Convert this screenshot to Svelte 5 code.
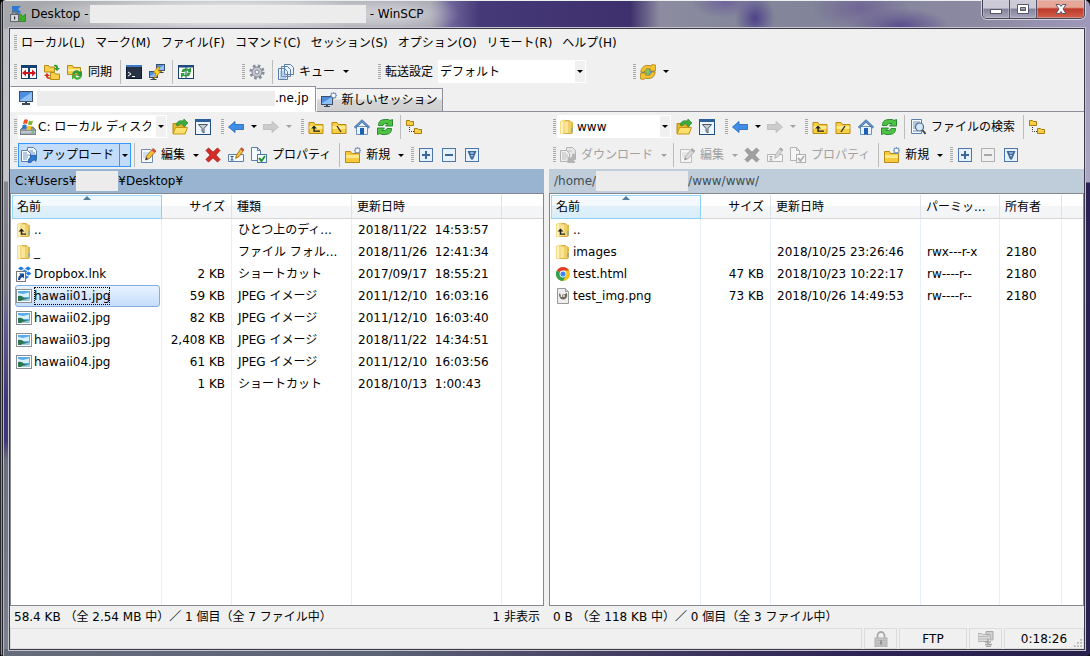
<script>
  const folder = '<path d="M1 3.5h5l1.5 2H15v9H1z" fill="#f6cf45" stroke="#b98a12"/><path d="M1.5 7h13v3h-13z" fill="#fde98c"/>';
  const openFolder = '<path d="M1 4.500h4l1 1.500h7v8.500H1z" fill="#e9b92c" stroke="#b98a12"/><path d="M3.500 8.500h12l-2.500 6.500H1z" fill="#fde06a" stroke="#c39518"/>';
  const monitor = (x, y, w, h) =>
    `<rect x="${x + 0.5}" y="${y + 0.5}" width="${w - 1}" height="${h - 1}" fill="#4b8ee2" stroke="#3d4f68"/><path d="M${x + 1} ${y + h - 2}L${x + w - 1} ${y + 1}V${y + h - 1}H${x + 1}z" fill="#8fc0f7"/><path d="M${x + w / 2 - 1} ${y + h}h2v1h2v1h-6v-1h2z" fill="#33475f"/>`;
  const star = '<g stroke="#6f93bd" stroke-width="1.500"><path d="M12.500 0v7M9 3.500h7M10 1l5 5M15 1l-5 5"/></g><circle cx="12.500" cy="3.500" r="1.800" fill="#fff"/>';
  const box = (inner) => `<rect x="1.500" y="1.500" width="13" height="13" fill="#e6f1ff" stroke="#4d76a8"/>${inner}`;
  const yellowFolder = '<path d="M3 1h7l3 2v12H4z" fill="#dcae43"/><path d="M1 2l5-1.500V14l-4 1.500-1-1z" fill="#f5dc85"/><path d="M2 2.500L4 2v12l-2 .500z" fill="#fdf2c0"/><path d="M6 2.500h6V14H6z" fill="#efd06a"/><path d="M6 2.500h3V14H6z" fill="#f9e694"/><path d="M12 3h2v11l-2 1z" fill="#e2b94e"/><path d="M12.500 9h1v4h-1z" fill="#57a8d8"/>';
  const doc = '<path d="M1.500 2.500h9l2 2v11h-11z" fill="#f5faff" stroke="#6a8db8"/>';

  const icons = {
    app: '<path d="M2 0h9L8 3l3 3-4 3-3-3-2 2z" fill="#2d7ad0"/><path d="M15.500 15.500H8l2-2-3-3 3-3 3 3 2.500-2.500z" fill="#3cae2b" stroke="#1f7d14" stroke-width=".7"/><path d="M2.500 9V7.500a2 2 0 0 1 4 0V9" fill="none" stroke="#6b6f76" stroke-width="1.500"/><rect x=".5" y="8.500" width="8" height="7" fill="#d2d5da" stroke="#61666f"/><path d="M4 10.500h1.200v3H4z" fill="#333"/>',
    compare: '<rect x=".5" y="1.500" width="15" height="13" fill="#fff" stroke="#16406f"/><path d="M0 1h16v3H0zM7 2h2v13H7z" fill="#16406f"/><path d="M1 9l4-3.500V8h6V5.500L15 9l-4 3.500V10H5v2.500z" fill="#d1171b"/>',
    syncBrowse: '<path d="M.5 1.500h4l1 1.500h5v5H.5zM6.500 8.500h4l1 1.500h4v5.500h-9z" fill="#f8cf48" stroke="#b78c18"/><path d="M10 1c3-1 4 0 4 3h2l-3 3-3-3h2c0-1-1-2-2-2z" fill="#2d9e3c"/><path d="M6 15c-3 0-4-1-4-3H0l3-3 3 3H4c0 1 1 1.500 2 1.500z" fill="#d6301f"/>',
    sync: '<path d="M.5 1.500h5l1 2h7v7H.5z" fill="#f8cf48" stroke="#b78c18"/><path d="M1 5h12v2H1z" fill="#fdea94"/><path d="M5 10c1-4 6-5 8-2l2-1v5h-5l1.500-1.500C10 8.500 8 9 7.500 10.500z" fill="#2f9c3a"/><path d="M15 12c-1 4-6 5-8 2l-2 1.500V11h5l-1.500 1.500c1.500 1.500 3.500 1 4-.5z" fill="#48b13f"/>',
    console: '<rect x=".5" y="1.500" width="15" height="13" fill="#273345" stroke="#0e1b30"/><path d="M0 1h16v2H0z" fill="#3a79ce"/><path d="M2 8l3 2-3 2M6 12.500h3" fill="none" stroke="#fff"/>',
    putty: monitor(7, 0, 9, 7) + monitor(0, 7, 9, 7) + '<path d="M9 3L4 9h3l-2 6 7-8H9l2-4z" fill="#ffd92e" stroke="#b47b00" stroke-width=".8"/>',
    refreshPanels: '<rect x=".5" y="1.500" width="15" height="13" fill="#fff" stroke="#16406f"/><path d="M0 1h16v2.500H0zM7.500 2h1v13h-1z" fill="#1d4a80"/><path d="M3.500 8C4 4.500 7 4 11 5l1-1h1v4.500H9L10.500 7C8 6.500 7 6.500 6.500 8zM12.500 9c-.5 3.500-3.500 4-7.500 3l-1 1.500H3V9h4l-1.500 1.500c2.500.5 3.500.5 4-1.500z" fill="#2c9a36"/>',
    gear: '<circle cx="8" cy="8" r="6.300" fill="none" stroke="#858d99" stroke-width="2.600" stroke-dasharray="2.600 2.350"/><circle cx="8" cy="8" r="5" fill="#c4c9d2" stroke="#7f8793"/><circle cx="8" cy="8" r="2" fill="#f3f4f6" stroke="#7f8793"/>',
    queue: '<g fill="#eaf3ff" stroke="#587fae"><path d="M6.500.5h6l3 3v7h-9zM3.500 2.500h6l3 3v7h-9zM.5 4.500h6l3 3v8h-9z"/></g><path d="M2 8h4M2 10h6M2 12h6M2 14h6" stroke="#8cabd0"/>',
    globe: '<circle cx="8" cy="8" r="7" fill="#4a9be0"/><path d="M5 4l4 1 1 4-3 3-2-3z" fill="#80c463"/><path d="M.8 8C1 3 6 0 11 2l1-1.500 3.500.500v6h-6l1.500-1.500C8 3.500 5 5 4.500 8z" fill="#f1c232" stroke="#b27c08" stroke-width=".7"/><path d="M15.200 8c-.2 5-5.200 8-10.200 6l-1 1.500-3.500-.5V9h6L5 10.500c3 2 6 .5 6.500-2.500z" fill="#f1c232" stroke="#b27c08" stroke-width=".7"/>',
    monitor: monitor(1, 1, 14, 11) + '<path d="M4 13h8v2H4z" fill="#3b4756"/>',
    newSession: monitor(0, 4, 12, 9) + '<path d="M3 14h6v1H3z" fill="#3b4756"/>' + star,
    drive: '<path d="M0 11l3-3h10l3 3v4.500H0z" fill="#8d969f" stroke="#56606a" stroke-width=".7"/><path d="M1 12h14v2.500H1z" fill="#bec5cb"/><path d="M11.500 12.500h2.500v1.500h-2.500z" fill="#54c944"/><path d="M4 1q2-1.500 4 0L7 5Q5 4 3 5z" fill="#ef5426"/><path d="M9 1.500q2 1.500 4 0l-1 4q-2 1-4 0z" fill="#77b829"/><path d="M2.700 6q2-1 4 0l-1 4q-2-1-4 0z" fill="#2a77cb"/><path d="M7.700 6.500q2 1 4 0l-1 4q-2 1-4 0z" fill="#f7c31c"/>',
    open: openFolder + '<path d="M4 6C5 2 8 1 11 2l1-2 4 4-4 4-1-2.500C9 4.500 7 5 6 7z" fill="#3dab3b" stroke="#23802a" stroke-width=".6"/>',
    filter: '<rect x=".5" y=".5" width="15" height="15" fill="#eef5ff" stroke="#234e80"/><path d="M0 0h16v3H0z" fill="#2d5f9b"/><path d="M3.500 5.500h9L9 9.500V14l-2-1.500v-3z" fill="#c4ccd5" stroke="#4e5966"/>',
    back: '<path d="M.5 8L7 2.500v3h8.500v5H7v3z" fill="#3f8fe8" stroke="#2361b1" stroke-width=".8"/>',
    forward: '<path d="M15.500 8L9 2.500v3H.5v5H9v3z" fill="#a8a8a8" stroke="#808080" stroke-width=".8"/>',
    up: folder + '<path d="M3 9.500L6 6.500l3 3H6.700v2H12v1.200H5.300V9.500z" fill="#222"/>',
    rootBack: folder + '<path d="M6 7l4 6" stroke="#222" stroke-width="1.300"/>',
    rootSlash: folder + '<path d="M10 7l-4 6" stroke="#222" stroke-width="1.300"/>',
    home: '<path d="M2.500 7.500h11v8h-11z" fill="#e9f3ff" stroke="#6a94c4"/><path d="M.3 8L8 .7 15.700 8l-1.200 1L8 3.300 1.500 9z" fill="#5f96cf" stroke="#2f5d94" stroke-width=".7"/><path d="M6 9h4v6.500H6z" fill="#1d61b5"/>',
    refresh: '<path d="M1.500 6.500C1.500 2 4 .5 9 .5h2.500L13 1.500 15.500.5v6.500H8.500L11 4.500H9Q6 4.500 6 6.500z" fill="#4fc145" stroke="#1e8426" stroke-width=".9"/><path d="M14.500 9.500c0 4.500-2.500 6-7.500 6H4.500L3 14.500.5 15.500V9h7L5 11.500h2q3 0 3-2z" fill="#4fc145" stroke="#1e8426" stroke-width=".9"/>',
    tree: '<path d="M.5 1.500h3l1 1h3v4h-7zM8.500 9.500h3l1 1h3v4h-7z" fill="#f8cf48" stroke="#a97c0c"/><path d="M3.500 8v4.500H8" stroke="#333" fill="none" stroke-dasharray="1 1"/>',
    upload: '<path d="M6.500.5h6l3 3v9h-9z" fill="#f5faff" stroke="#587fae"/><path d="M.5 3.500h6l3 3v8h-9z" fill="#fff" stroke="#587fae"/><path d="M2 6h4M2 8h6M2 10h5M2 12h4M8 4h4M9 6h5" stroke="#6d93c2"/><path d="M7 15.500q0-4 3-6L8.500 8H15v6.500L13.500 13Q11 13 10 15.500z" fill="#2f7ad1" stroke="#174e91" stroke-width=".6"/>',
    download: '<path d="M6.500.5h6l3 3v9h-9z" fill="#ddd" stroke="#777"/><path d="M.5 3.500h6l3 3v8h-9z" fill="#eee" stroke="#777"/><path d="M2 6h4M2 8h6M2 10h5M2 12h4M8 4h4" stroke="#888"/><path d="M14.500 6.500q2 4-1 6.500l1.500 1.500V16H7.500V9l2 2q3 0 2.500-4z" fill="#777"/>',
    edit: doc + '<path d="M3 6h6M3 8h5M3 10h4" stroke="#aac2de"/><path d="M5.500 13l1-4L13 1.500l3 2.500-6.500 7.500z" fill="#f5bf3a" stroke="#94640d" stroke-width=".8"/><path d="M13 1.500l3 2.500-1.500 1.800-3-2.500z" fill="#d8483e"/><path d="M5.500 13l.7-2.500 1.800 1.500z" fill="#222"/>',
    remove: '<path d="M3.500 1L8 5.200 12.500 1 15 3.500 10.800 8 15 12.500 12.500 15 8 10.800 3.500 15 1 12.500 5.200 8 1 3.500z" fill="#d92b25" stroke="#9b100e" stroke-width=".8"/>',
    rename: '<path d="M.5 7.500h15v7H.5z" fill="#f5faff" stroke="#587fae"/><path d="M2.500 9.500h3M2.500 13h3M4 9.500V13" stroke="#2e5487"/><path d="M7.500 11.500l1-3.500L13.500.700l2.500 2-5 7z" fill="#f5bf3a" stroke="#94640d" stroke-width=".8"/><path d="M13.500.7l2.500 2-1.200 1.600-2.500-2z" fill="#d8483e"/>',
    props: '<path d="M.5.5h6l3 3v10h-9z" fill="#f5faff" stroke="#587fae"/><path d="M6.500.5v3h3" fill="none" stroke="#587fae"/><rect x="6.500" y="7.500" width="9" height="8" fill="#fff" stroke="#4a76ab"/><path d="M8 11l2.500 3L14 9" fill="none" stroke="#239a35" stroke-width="2"/>',
    newFolder: '<path d="M.5 4.500h5l1 2h8v9H.5z" fill="#f6c93e" stroke="#b98a12"/><path d="M1 8h13v3H1z" fill="#fde98c"/>' + star,
    plus: box('<path d="M4 8h8M8 4v8" stroke="#3d6699" stroke-width="2"/>'),
    minus: box('<path d="M4 8h8" stroke="#3d6699" stroke-width="2"/>'),
    invert: box('<path d="M3.500 4h9L9 12.500H7zM7 8l1 2 1-2zM6 5.500l.5 1h3l.5-1z" fill="#3d6699" fill-rule="evenodd"/>'),
    find: '<path d="M1.500.5h10v14h-10z" fill="#f5faff" stroke="#587fae"/><path d="M3 3h7M3 5h4M3 7h3M3 9h3M3 12h5" stroke="#6d93c2"/><circle cx="9.500" cy="8" r="4" fill="#d4e8fb" stroke="#516983" stroke-width="1.200"/><path d="M12.500 11l3 4" stroke="#3f4a58" stroke-width="2"/>',
    parent: yellowFolder + '<path d="M2.500 9.500l3-3 3 3H6.200v2H10v1.300H4.800V9.500z" fill="#222"/>',
    folder: yellowFolder,
    dropbox: '<path d="M5 .5L8 2.500 5 4.500 2 2.500zM12 .5l3 2-3 2-3-2zM8.500 3.500l3 2-3 2-3-2zM12.500 5.500l3 2-3 2-3-2zM10 9.500l3 1.500-3 2z" fill="#1f7de2"/><rect x=".5" y="5.500" width="9" height="10" fill="#fff" stroke="#777"/><path d="M2 14q0-4 2.500-5L3 7.500h5v5L6.500 11Q4.500 11.500 4 14z" fill="#12498f"/>',
    image: '<rect x=".5" y="1.500" width="15" height="13" fill="#fff" stroke="#8a8f96"/><path d="M2 3h12v10H2z" fill="#5aade6"/><path d="M2 5l5 1 6-1.500V9H2z" fill="#d8effc"/><path d="M2 8q4-1 6 2l6 1v2H2z" fill="#2d7650"/><path d="M6 12l8-1.500V13H5z" fill="#9ccbe6"/>',
    chrome: '<circle cx="8" cy="8" r="7" fill="#fbc116"/><path d="M8 8L1.900 4.500A7 7 0 0 1 14.100 4.500H8z" fill="#dd4031"/><path d="M8 8L1.900 4.500A7 7 0 0 0 8 15l3-5.200z" fill="#30a150"/><circle cx="8" cy="8" r="3.400" fill="#fff"/><circle cx="8" cy="8" r="2.600" fill="#4285f4"/>',
    png: '<path d="M2.500.5h8l3 3v12h-11z" fill="#eee" stroke="#999"/><path d="M10.500.5v3h3" fill="#ddd" stroke="#999"/><path d="M4 5l2 2 3-.5 3-1.500q1 6-4 6.500-4 0-4-6.500z" fill="#6b6759"/><circle cx="6.500" cy="8" r=".9" fill="#fff"/><circle cx="9" cy="8" r=".9" fill="#fff"/>',
    lock: '<path d="M4.500 7V4.500a3.500 3.500 0 0 1 7 0V7" fill="none" stroke="#a9a9a9" stroke-width="1.800"/><rect x="2" y="7" width="12" height="9" fill="#c6c6c6" stroke="#b0b0b0"/><path d="M2 9.500h12M2 12h12M2 14h12" stroke="#b8b8b8"/><path d="M7.200 9.500h1.600v4H7.200z" fill="#888"/>',
    archive: '<path d="M0 2.500h4l1 1h5v7H0z" fill="#dcdcdc" stroke="#b5b5b5"/><path d="M0 5.500h10M0 8h10" stroke="#b8b8b8"/><path d="M8 .5h7V9h-3V3.500H8z" fill="#d0d0d0" stroke="#a8a8a8"/><path d="M10 8v5M7 13.500h7M8 15.500h5M7 11h6" stroke="#a5a5a5" stroke-width="1.500"/>'
  };

  const menus = ['ローカル(L)', 'マーク(M)', 'ファイル(F)', 'コマンド(C)', 'セッション(S)', 'オプション(O)', 'リモート(R)', 'ヘルプ(H)'];

  const localRows = [
    ['parent', '..', '', 'ひとつ上のディ...', '2018/11/22  14:53:57'],
    ['folder', '_', '', 'ファイル フォル...', '2018/11/26  12:41:34'],
    ['dropbox', 'Dropbox.lnk', '2 KB', 'ショートカット', '2017/09/17  18:55:21'],
    ['image', 'hawaii01.jpg', '59 KB', 'JPEG イメージ', '2011/12/10  16:03:16'],
    ['image', 'hawaii02.jpg', '82 KB', 'JPEG イメージ', '2011/12/10  16:03:40'],
    ['image', 'hawaii03.jpg', '2,408 KB', 'JPEG イメージ', '2018/11/22  14:34:51'],
    ['image', 'hawaii04.jpg', '61 KB', 'JPEG イメージ', '2011/12/10  16:03:56'],
    ['', '', '1 KB', 'ショートカット', '2018/10/13  1:00:43']
  ];
  const remoteRows = [
    ['parent', '..', '', '', '', ''],
    ['folder', 'images', '', '2018/10/25 23:26:46', 'rwx---r-x', '2180'],
    ['chrome', 'test.html', '47 KB', '2018/10/23 10:22:17', 'rw----r--', '2180'],
    ['png', 'test_img.png', '73 KB', '2018/10/26 14:49:53', 'rw----r--', '2180']
  ];

  let selected = $state('hawaii01.jpg');
</script>

{#snippet icon(name)}
  <svg class="icon" viewBox="0 0 16 16" aria-hidden="true">{@html icons[name]}</svg>
{/snippet}

{#snippet tool(name, label, text = '', disabled = false)}
  <button class="tool" aria-label={label} {disabled}>{@render icon(name)}{#if text}<span>{text}</span>{/if}</button>
{/snippet}

{#snippet drop(label, disabled = false)}
  <button class="drop" aria-label={label} {disabled}><i class="caret"></i></button>
{/snippet}

{#snippet navigation(remote)}
  <div class="group">
    {@render tool('open', 'ディレクトリを開く')}
    {@render tool('filter', 'フィルター')}
  </div>
  <div class="group next">
    <i class="grip"></i>
    {@render tool('back', '戻る')}{@render drop('戻る履歴')}
    {@render tool('forward', '進む', '', true)}{@render drop('進む履歴', true)}
  </div>
  <div class="group next">
    <i class="grip"></i>
    {@render tool('up', '親ディレクトリ')}
    {@render tool(remote ? 'rootSlash' : 'rootBack', 'ルート')}
    {@render tool('home', 'ホーム')}
    {@render tool('refresh', '更新')}
    <i class="sep"></i>
    {#if remote}
      {@render tool('find', 'ファイルの検索', 'ファイルの検索')}
      <i class="sep"></i>
    {/if}
    {@render tool('tree', 'ツリー')}
  </div>
{/snippet}

{#snippet actions(remote)}
  <div class="toolbar actions">
    <div class="group">
      <i class="grip"></i>
      <div class="split" class:hot={!remote}>
        {@render tool(remote ? 'download' : 'upload', '転送', remote ? 'ダウンロード' : 'アップロード', remote)}
        {@render drop('転送オプション', remote)}
      </div>
      <i class="sep"></i>
      {@render tool('edit', '編集', '編集', remote)}{@render drop('編集オプション', remote)}
      {@render tool('remove', '削除', '', remote)}
      {@render tool('rename', '名前の変更', '', remote)}
      {@render tool('props', 'プロパティ', 'プロパティ', remote)}
      <i class="sep"></i>
      {@render tool('newFolder', '新規', '新規')}{@render drop('新規オプション')}
    </div>
    <div class="group">
      <i class="grip"></i>
      {@render tool('plus', '選択')}
      {@render tool('minus', '選択解除', '', remote)}
      {@render tool('invert', '選択の反転')}
    </div>
  </div>
{/snippet}

{#snippet listing(heads, widths, rows)}
  <div class="list">
    <table>
      <colgroup>
        {#each widths as w}<col style="width:{w}px" />{/each}
        <col />
      </colgroup>
      <thead>
        <tr>
          {#each heads as h, i}
            <th class:sorted={i === 0} class:num={i === 1}>{h}{#if i === 0}<i class="sort"></i>{/if}</th>
          {/each}
          <th></th>
        </tr>
      </thead>
      <tbody>
        {#each rows as row}
          <tr onclick={() => (selected = row[1])}>
            <td class="name">
              <div class="file" class:selected={row[1] && row[1] === selected}>
                {#if row[0]}{@render icon(row[0])}{/if}<span>{row[1]}</span>
              </div>
            </td>
            {#each row.slice(2) as cell, i}
              <td class:num={i === 0}>{cell}</td>
            {/each}
            <td></td>
          </tr>
        {/each}
        <tr class="rest">
          {#each widths as w}<td></td>{/each}
          <td></td>
        </tr>
      </tbody>
    </table>
  </div>
{/snippet}

<div class="window">
  <header class="titlebar">
    {@render icon('app')}
    <span>Desktop -</span>
    <i class="blank host"></i>
    <span>- WinSCP</span>
    <div class="controls">
      <button aria-label="最小化"><svg viewBox="0 0 14 12"><rect x="1.500" y="6.500" width="11" height="4" fill="#fff" stroke="#545869" /></svg></button>
      <button aria-label="最大化"><svg viewBox="0 0 14 12"><path d="M1.500 1.500h11v9h-11zM4.500 4.500v3h5v-3z" fill="#fff" fill-rule="evenodd" stroke="#545869" /></svg></button>
      <button class="close" aria-label="閉じる"><svg viewBox="0 0 14 12"><path d="M2 1.500h3.500L7 3.500l1.500-2H12L9 6l3 4.500H8.500L7 8.500l-1.500 2H2L5 6z" fill="#fff" stroke="#545869" /></svg></button>
    </div>
  </header>

  <main class="client">
    <nav class="menubar">
      <i class="grip"></i>
      {#each menus as m}<button>{m}</button>{/each}
    </nav>

    <div class="toolbar">
      <div class="group">
        <i class="grip"></i>
        {@render tool('compare', '比較')}
        {@render tool('syncBrowse', '同期ブラウズ')}
        {@render tool('sync', '同期', '同期')}
        <i class="sep"></i>
        {@render tool('console', 'ターミナル')}
        {@render tool('putty', 'PuTTY')}
        <i class="sep"></i>
        {@render tool('refreshPanels', '両方を更新')}
      </div>
      <div class="group queue">
        <i class="grip"></i>
        {@render tool('gear', '環境設定')}
        <i class="sep"></i>
        {@render tool('queue', 'キュー', 'キュー')}{@render drop('キューオプション')}
      </div>
      <div class="group transfer">
        <i class="grip"></i>
        <label for="preset">転送設定</label>
        <div class="combo preset">
          <select id="preset"><option>デフォルト</option></select>
          <i class="caret"></i>
        </div>
      </div>
      <div class="group updates">
        <i class="grip"></i>
        {@render tool('globe', '更新の確認')}{@render drop('更新オプション')}
      </div>
    </div>

    <div class="tabs">
      <button class="tab active">{@render icon('monitor')}<i class="blank session"></i><span>.ne.jp</span></button>
      <button class="tab">{@render icon('newSession')}<span>新しいセッション</span></button>
    </div>

    <div class="panes">
      <section class="pane">
        <div class="toolbar">
          <i class="grip"></i>
          <div class="combo drive">
            {@render icon('drive')}
            <select aria-label="ドライブ"><option>C: ローカル ディスク</option></select>
            <i class="caret"></i>
          </div>
          {@render navigation(false)}
        </div>
        {@render actions(false)}
        <div class="path">C:¥Users¥<i class="blank user"></i>¥Desktop¥</div>
        {@render listing(['名前', 'サイズ', '種類', '更新日時'], [150, 70, 120, 150], localRows)}
        <div class="summary"><span>58.4 KB （全 2.54 MB 中）／ 1 個目（全 7 ファイル中）</span><span>1 非表示</span></div>
      </section>

      <section class="pane remote">
        <div class="toolbar">
          <i class="grip"></i>
          <div class="combo folder">
            {@render icon('folder')}
            <select aria-label="ディレクトリ"><option>www</option></select>
            <i class="caret"></i>
          </div>
          {@render navigation(true)}
        </div>
        {@render actions(true)}
        <div class="path">/home/<i class="blank account"></i>/www/www/</div>
        {@render listing(['名前', 'サイズ', '更新日時', 'パーミッ...', '所有者'], [150, 70, 150, 79, 62], remoteRows)}
        <div class="summary"><span>0 B （全 118 KB 中）／ 0 個目（全 3 ファイル中）</span></div>
      </section>
    </div>

    <footer class="statusbar">
      <div class="grow"></div>
      <div class="small">{@render icon('lock')}</div>
      <div class="protocol">FTP</div>
      <div class="small">{@render icon('archive')}</div>
      <div class="time">0:18:26<svg class="resize" viewBox="0 0 10 10"><path d="M8 1h2v2H8zM8 4.500h2v2H8zM8 8h2v2H8zM4.500 4.500h2v2h-2zM4.500 8h2v2h-2zM1 8h2v2H1z" fill="#b5b5b5" /></svg></div>
    </footer>
  </main>
</div>

<style>
  :global(body) { margin: 0; background: #000; }

  .window {
    display: flex;
    flex-direction: column;
    box-sizing: border-box;
    height: 100vh;
    padding: 0 5px 6px 9px;
    font: 12px/16px "DejaVu Sans", "Noto Sans CJK JP", sans-serif;
    color: #000;
    border-radius: 6px 6px 4px 4px;
    background:
      linear-gradient(#eaf0ef, #eaf0ef) top / 100% 1px no-repeat,
      linear-gradient(90deg, #26282e 1px, #8b8fa0 1px 2px, #26282e 2px 3px, #b4b7bf 3px 4px, transparent 4px) left / 4px 100% no-repeat,
      radial-gradient(ellipse 210px 22px at 230px 14px, #dcdee0 40%, transparent) no-repeat,
      radial-gradient(ellipse 60px 22px at 400px 14px, #c8c8d0, transparent) no-repeat,
      radial-gradient(ellipse 34px 16px at 725px 2px, #70649c, transparent) no-repeat,
      radial-gradient(ellipse 20px 24px at 755px 18px, #4f438a, transparent) no-repeat,
      radial-gradient(ellipse 50px 22px at 860px 8px, #716594, transparent) no-repeat,
      radial-gradient(ellipse 50px 18px at 900px 26px, #5a4e8e, transparent) no-repeat,
      linear-gradient(90deg, #a6a8ac 0, #a3a3ad 430px, #6f659a 450px, #463978 480px, #3d306c 630px, #8d8ba0 660px, #85889a 720px, #82859a 820px, #8c89a2 980px, #9e98ba) top / 100% 29px no-repeat,
      linear-gradient(#a09ab8, #aaa5c0 182px, #2b2155 183px, #292150) right / 6px 100% no-repeat,
      linear-gradient(90deg, #666c7c, #5c6375 35%, #40395f 60%, #2d2355 80%, #262049) bottom / 100% 7px no-repeat,
      linear-gradient(#b9bbc0, #c2c4c8 181px, #85888e 182px, #777a86 290px, #6a5f92 320px, #43357a 400px, #43357a 440px, #696f7e 460px, #7d8290);
  }

  button, select { font: inherit; color: inherit; }
  button { border: 0; padding: 0; background: none; }
  .icon { width: 16px; height: 16px; flex: none; display: block; }
  .blank { background: #ececec; display: block; }

  .titlebar { display: flex; align-items: center; height: 28px; padding-left: 1px; flex: none; }
  .titlebar .icon { margin-right: 5px; }
  .host { width: 276px; height: 18px; margin: 0 4px 0 1px; }
  .controls { display: flex; margin-left: auto; align-self: flex-start; border: 1px solid #454455; border-top: 0; border-radius: 0 0 5px 5px; box-shadow: 0 0 0 1px #d5d3de; overflow: hidden; }
  .controls button { width: 27px; height: 18px; display: grid; place-items: center; border-right: 1px solid #545263; background: linear-gradient(#cccad7 0 45%, #83819a 50%, #aaa8bc); box-shadow: inset 0 0 0 1px #d6d4df66; }
  .controls button.close { width: 47px; border: 0; background: linear-gradient(#e6a698 0 40%, #be3929 50%, #d0614a); }
  .controls svg { width: 14px; height: 12px; }

  .client { flex: 1; min-height: 0; display: flex; flex-direction: column; border: 1px solid #3f3a49; background: #f0f0f0; box-shadow: 0 0 0 1px #c4c4ce; }

  .grip { flex: none; width: 3px; height: 16px; margin: 0 1px 0 4px; background: repeating-linear-gradient(#a8a8a8 0 1px, #f0f0f0 1px 2px); }
  .menubar { display: flex; align-items: center; height: 28px; flex: none; }
  .menubar button { padding: 0 6px 0 4px; white-space: nowrap; }
  .menubar .grip { margin-right: 0; }

  .toolbar { display: flex; align-items: center; height: 29px; flex: none; white-space: nowrap; }
  .actions { height: 28px; }
  .group { display: flex; align-items: center; flex: none; }
  .next { margin-left: 2px; }
  .queue { margin-left: 40px; }
  .transfer { margin-left: 22px; }
  .transfer label { margin: 0 5px 0 3px; }
  .updates { margin-left: 43px; }
  .tool { display: flex; align-items: center; height: 24px; padding: 0 4px 0 3px; }
  .tool:has(span) { padding-right: 5px; gap: 5px; }
  .drop { width: 12px; height: 24px; display: grid; place-items: center; }
  .caret { width: 0; height: 0; border: solid transparent; border-width: 3px 3px 0; border-top-color: #000; }
  .tool:disabled { color: #a0a0a0; }
  .tool:disabled .icon { filter: grayscale(1) opacity(.5); }
  .drop:disabled .caret { border-top-color: #a0a0a0; }
  .sep { width: 1px; height: 24px; margin: 0 2px 0 3px; background: #bcbcbc; flex: none; }
  .split { display: flex; }
  .hot { background: #c2dcfa; box-shadow: inset 0 0 0 1px #3399ff; }
  .hot .drop { box-shadow: inset 0 0 0 1px #3399ff; }

  .combo { display: flex; align-items: center; height: 23px; box-sizing: border-box; background: #fff; position: relative; margin-right: 2px; padding-left: 2px; }
  .combo select { flex: 1; min-width: 0; height: 23px; appearance: none; border: 0; padding: 0 0 0 2px; background: none; margin-right: 16px; outline: 0; }
  .combo .caret { position: absolute; right: 3px; top: 10px; outline: 0; }
  .combo::before { content: ""; position: absolute; right: 1px; top: 1px; bottom: 1px; width: 10px; background: #f0f0f0; }
  .preset { width: 148px; margin: 0; padding-left: 0; }
  .drive { width: 149px; }
  .folder { width: 114px; }

  .tabs { display: flex; align-items: flex-end; height: 26px; flex: none; box-shadow: inset 0 -1px #8e8f9c; }
  .tab { display: flex; align-items: center; gap: 5px; height: 24px; box-sizing: border-box; padding: 0 4px; border: 1px solid #8e8f9c; border-left-color: #fff; background: linear-gradient(#f2f2f2 45%, #d6d6d6 50%, #cfcfcf); }
  .tab.active { height: 26px; gap: 0; padding: 0 6px 2px 7px; background: #fff; border-bottom-color: #fff; }
  .session { width: 238px; height: 15px; margin-left: 3px; }

  .panes { flex: 1; min-height: 0; display: grid; grid-template-columns: minmax(0, 534fr) minmax(0, 535fr); grid-template-rows: minmax(0, 1fr); gap: 5px; }
  .pane { display: flex; flex-direction: column; min-width: 0; }
  .path { display: flex; align-items: center; height: 24px; padding-left: 5px; background: #99b4d1; flex: none; }
  .remote .path { background: #bfcddb; color: #434e54; }
  .path .blank { height: 20px; }
  .user { width: 42px; }
  .account { width: 92px; }

  .list { flex: 1; min-height: 0; background: #fff; border: 1px solid #828790; padding: 1px 0 0 1px; overflow: hidden; }
  table { width: 100%; height: 100%; table-layout: fixed; border-collapse: separate; border-spacing: 0; white-space: pre; }
  th { position: relative; height: 24px; box-sizing: border-box; padding: 0 6px 0 5px; font-weight: normal; text-align: left; background: linear-gradient(#fff 50%, #f4f5f7 50%); border-right: 1px solid #e0e2e6; border-bottom: 1px solid #d5d5d5; }
  th.sorted { background: linear-gradient(#f3f9fd 45%, #dff0fa 50%, #d9eefa); border-color: #8fd1f5; box-shadow: inset 1px 1px #96d9f9; }
  .sort { position: absolute; top: 1px; left: 50%; border: solid transparent; border-width: 0 4px 4px; margin-left: -4px; border-bottom-color: #50809f; }
  .num { text-align: right; }
  th:last-child, td:last-child { border-right: 0; }
  td { height: 22px; padding: 0 6px; border-right: 1px solid #e6f0fa; overflow: hidden; }
  td.name { padding: 0 1px 0 3px; }
  .rest td { height: auto; }
  .file { display: flex; align-items: center; height: 22px; box-sizing: border-box; border: 1px solid transparent; border-radius: 3px; gap: 2px; }
  .file span { height: 18px; line-height: 18px; outline-offset: -1px; }
  .file.selected { background: linear-gradient(#e8f2fe, #c5ddfc); border-color: #84acdd; }
  .selected span { outline: 1px dotted #000; }

  .summary { display: flex; justify-content: space-between; align-items: center; height: 22px; padding: 0 4px; flex: none; white-space: nowrap; }

  .statusbar { display: flex; gap: 2px; height: 21px; flex: none; }
  .statusbar > div { display: grid; place-items: center; box-sizing: border-box; border: 1px solid #dcdcdc; position: relative; }
  .statusbar .grow { flex: 1; }
  .small { width: 33px; }
  .protocol { width: 68px; }
  .time { width: 80px; }
  .resize { position: absolute; right: 1px; bottom: 1px; width: 9px; height: 9px; }
</style>
